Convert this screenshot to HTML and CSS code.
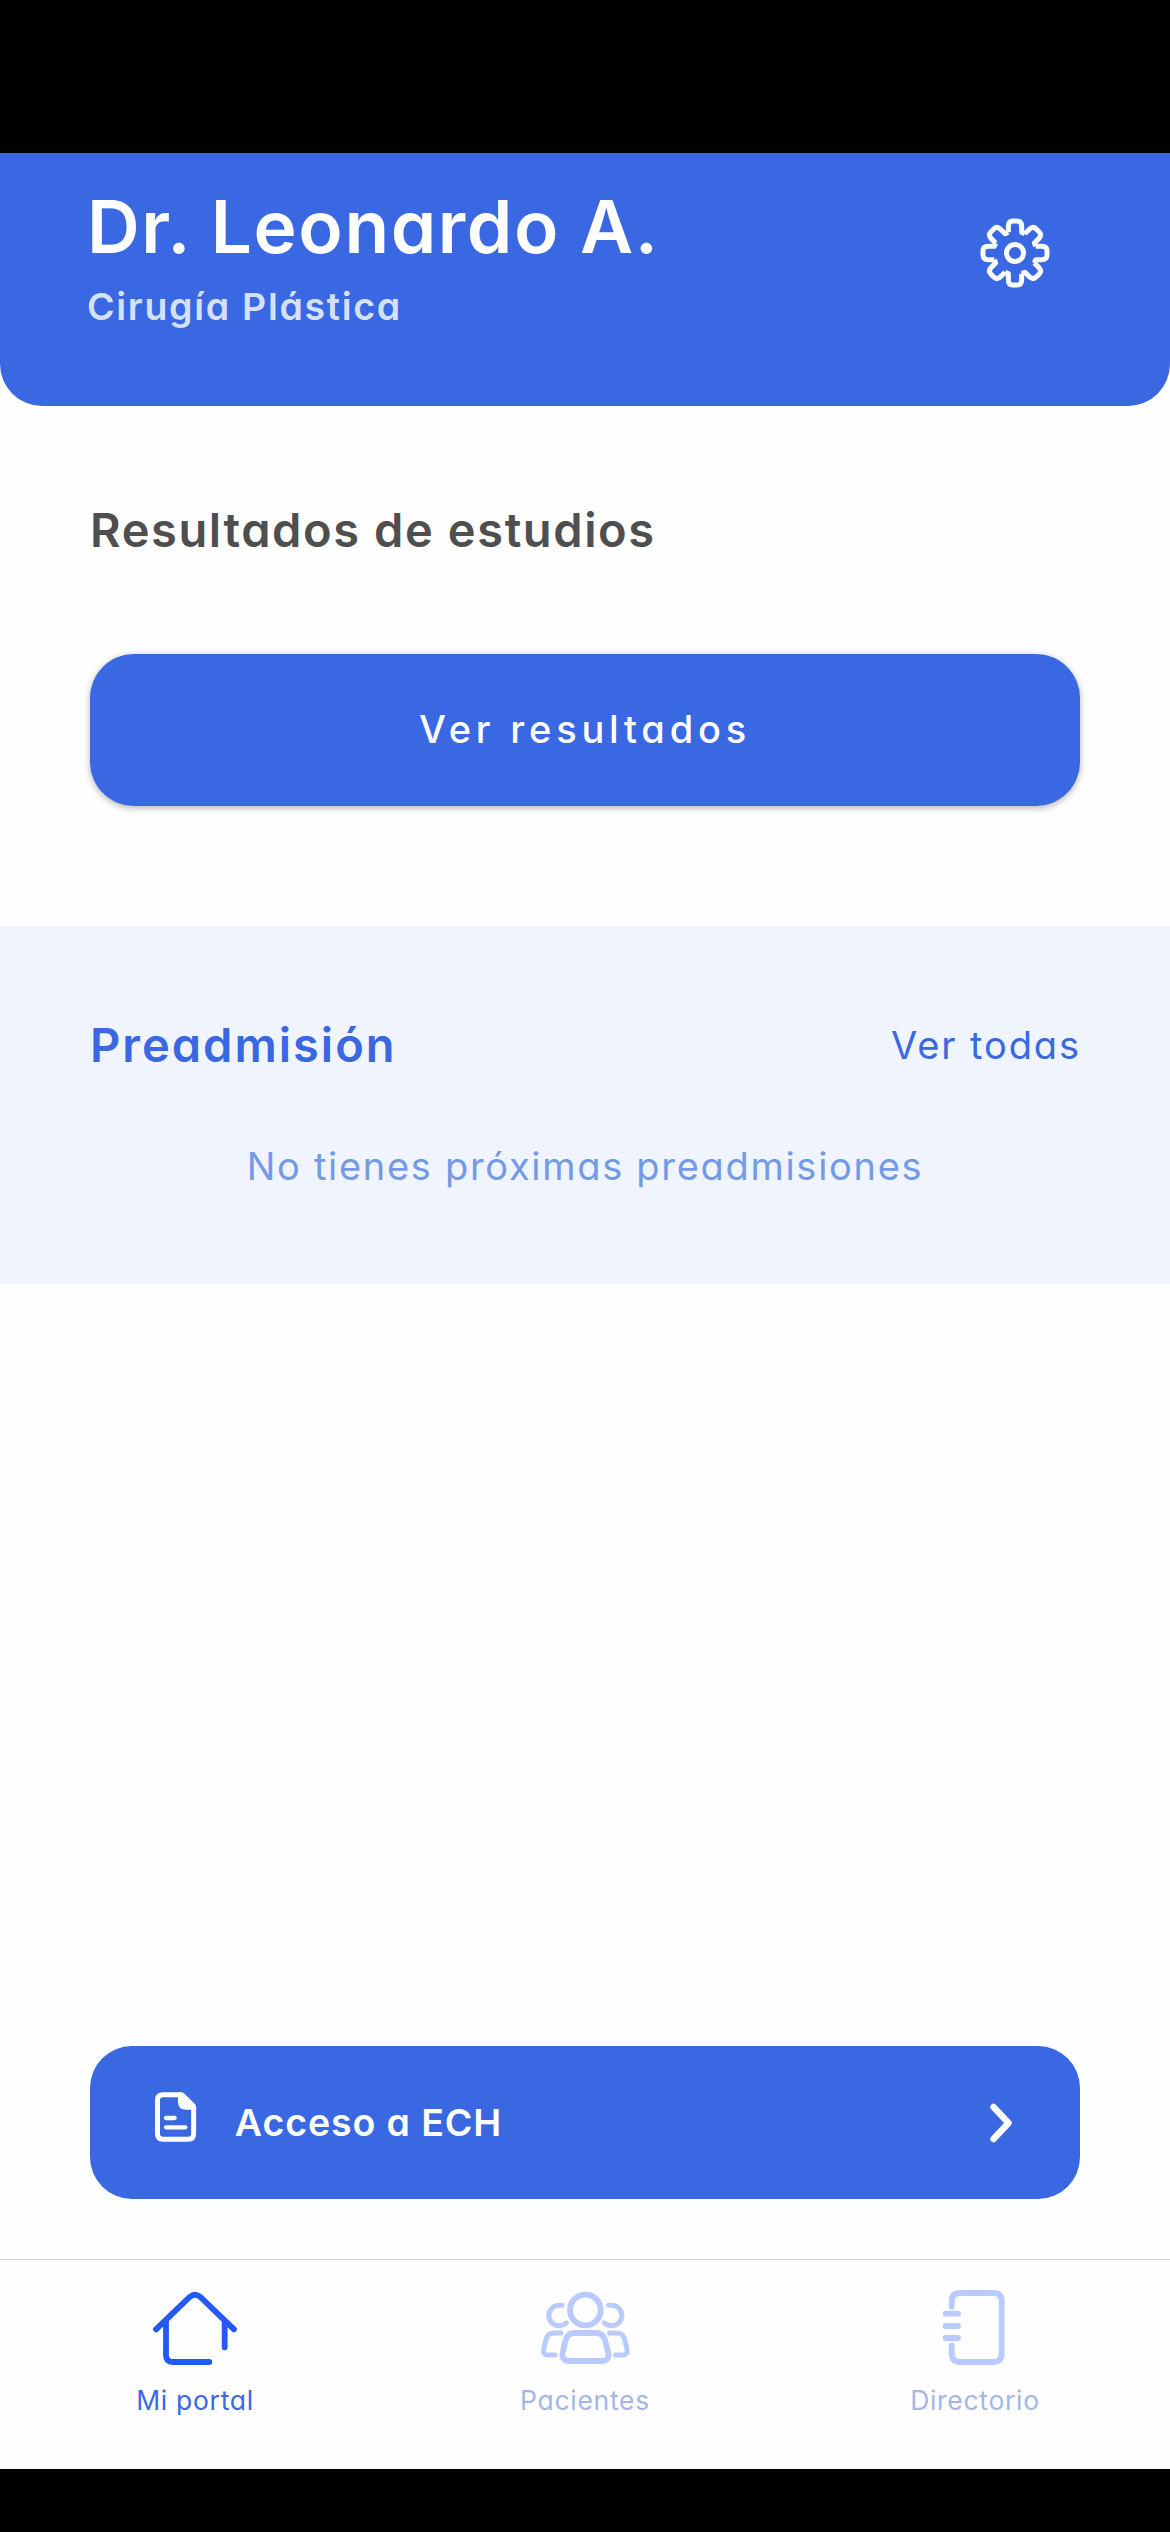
FILE: index.html
```html
<!DOCTYPE html>
<html lang="es">
<head>
<meta charset="utf-8">
<title>Mi portal</title>
<link rel="stylesheet" href="styles.css">
</head>
<body>
<div class="screen">
  <header class="header">
    <div class="profile">
      <h1 class="name">Dr. Leonardo A.</h1>
      <p class="specialty">Cirugía Plástica</p>
    </div>
    <svg class="gear" viewBox="-120 -120 240 240" aria-label="Ajustes">
      <defs><path id="tooth" d="M-20-62V-80Q-20-96-6-96H6Q20-96 20-80V-62L29.7-58"/></defs>
      <use href="#tooth"/><use href="#tooth" transform="rotate(45)"/><use href="#tooth" transform="rotate(90)"/><use href="#tooth" transform="rotate(135)"/><use href="#tooth" transform="rotate(180)"/><use href="#tooth" transform="rotate(225)"/><use href="#tooth" transform="rotate(270)"/><use href="#tooth" transform="rotate(315)"/>
      <circle r="25.5"/>
    </svg>
  </header>
  <main class="content">
    <section class="results">
      <h2 class="heading">Resultados de estudios</h2>
      <button class="primary">Ver resultados</button>
    </section>
    <section class="preadmission">
      <div class="row">
        <h2 class="heading heading-blue">Preadmisión</h2>
        <a class="link">Ver todas</a>
      </div>
      <p class="empty">No tienes próximas preadmisiones</p>
    </section>
    <button class="access">
      <svg class="doc" viewBox="282 211 130 156"><path class="line" d="M360 222H309Q292.500 222 292.500 238.500V339.500Q292.500 356 309 356H384.500Q401 356 401 339.500V262"/><path class="fold" d="M354 214.500H363Q369 214.500 373 218.500L404 249.500Q408.500 254 408.500 260V267H378Q354 267 354 244Z"/><path class="text" d="M318 292H344M318 320H376"/></svg>
      <span class="access-label">Acceso a ECH</span>
      <svg class="chevron" viewBox="0 0 24 42"><path d="M4.500 5L19.500 21L4.500 37"/></svg>
    </button>
  </main>
  <nav class="tabs">
    <a class="tab tab-active">
      <svg class="tab-icon" viewBox="0 135 510 255"><path d="M138 268L240 170Q255 158 270 170L372 268M168 245V345Q168 366 188 366H298M344 245V322"/></svg>
      <span class="tab-label">Mi portal</span>
    </a>
    <a class="tab">
      <svg class="tab-icon" viewBox="0 135 510 255"><circle cx="256" cy="210" r="46"/><path d="M225 279H287Q309 279 315 300L325 338Q329 363 304 363H208Q184 363 188 338L197 300Q203 279 225 279Z"/><g id="side"><path class="thin" d="M186 196H177A30.500 30.500 0 0 0 177 257Q190 257 199 249M183 279H164Q143 279 138 298L131 328Q128 345 145 345H165"/></g><use href="#side" transform="translate(512) scale(-1 1)"/></svg>
      <span class="tab-label">Pacientes</span>
    </a>
    <a class="tab">
      <svg class="tab-icon" viewBox="0 135 510 255"><path d="M185 200V185Q185 159 211 159H310Q335 159 335 184V340Q335 366 310 366H211Q185 366 185 340V316M167 221H204M167 258H204M167 294H204"/></svg>
      <span class="tab-label">Directorio</span>
    </a>
  </nav>
</div>
</body>
</html>
```
FILE: styles.css
```css
* { box-sizing: border-box; margin: 0; padding: 0; }

/* cv11 selects the single-storey "a" */
body { background: #000; font-family: Inter, sans-serif; font-feature-settings: "cv11"; }

button { border: 0; font: inherit; font-feature-settings: inherit; }

.screen { display: flex; flex-direction: column; height: 2532px; padding: 153px 0 63px; }

.content { display: flex; flex: 1; flex-direction: column; background: #fefefe; }

.header {
  display: flex;
  justify-content: space-between;
  height: 253px;
  padding: 29px 115px 0 87px;
  background: #3968e2;
  border-radius: 0 0 42px 42px;
  box-shadow: 0 42px 0 #fefefe;
  color: #fefefe;
}

.name { font-size: 73px; font-weight: 600; letter-spacing: 1.6px; line-height: 90px; }
.specialty { margin-top: 10px; color: #d5e1fc; font-size: 37.5px; font-weight: 600; letter-spacing: 1.7px; line-height: 50px; }

.gear { width: 80px; height: 80px; margin-top: 31px; fill: none; stroke: #fcfdff; stroke-width: 15; stroke-linejoin: round; }

.results { padding: 94px 90px 120px; }
.heading { color: #4f4f4f; font-size: 47px; font-weight: 600; letter-spacing: 1.6px; line-height: 60px; }
.heading-blue { color: #3968e2; letter-spacing: 2px; }

.primary {
  display: block;
  width: 100%;
  height: 152px;
  margin-top: 94px;
  padding-bottom: 2px;
  background: #3968e2;
  border-radius: 44px;
  box-shadow: 0 2px 7px rgba(0, 0, 0, .3);
  color: #fefefe;
  font-size: 38px;
  font-weight: 500;
  letter-spacing: 4.8px;
}

.preadmission { height: 358px; padding: 89px 90px 0; background: #eff4ff; }
.row { display: flex; align-items: center; justify-content: space-between; }
.link { margin-right: -1px; color: #3968e2; font-size: 38px; letter-spacing: 1.9px; }
.empty { margin-top: 66px; color: #7399e9; font-size: 38px; letter-spacing: 1.7px; line-height: 50px; text-align: center; }

.access {
  display: flex;
  align-items: center;
  height: 153px;
  margin: auto 90px 60px;
  padding: 0 67px 0 64px;
  background: #3968e2;
  border-radius: 42px;
  color: #fefefe;
}
.access-label { margin-left: 37.5px; font-size: 37.5px; font-weight: 600; letter-spacing: .9px; }
.doc { width: 43.3px; height: 52px; margin-bottom: 12px; fill: none; stroke: #fefefe; stroke-linecap: round; }
.line { stroke-width: 15; }
.fold { fill: #fefefe; stroke: none; }
.text { stroke-width: 13; }
.chevron { width: 24px; height: 42px; margin-left: auto; fill: none; stroke: #fefefe; stroke-width: 6.5; stroke-linecap: round; stroke-linejoin: round; }

.tabs {
  display: grid;
  grid-template-columns: repeat(3, 1fr);
  height: 210px;
  padding-top: 25px;
  background: #fefefe;
  border-top: 1px solid #d2d2d4;
}
.tab { display: flex; flex-direction: column; align-items: center; color: #a4b6e8; }
.tab-active { color: #3968e2; }
.tab-icon { width: 170px; height: 85px; fill: none; stroke: #b9cafc; stroke-width: 17.5; stroke-linecap: round; stroke-linejoin: round; }
.tab-active .tab-icon { stroke: #2459f5; }
.thin { stroke-width: 15; }
.tab-label { margin-top: 10px; font-size: 26.5px; letter-spacing: .7px; line-height: 40px; }
```
